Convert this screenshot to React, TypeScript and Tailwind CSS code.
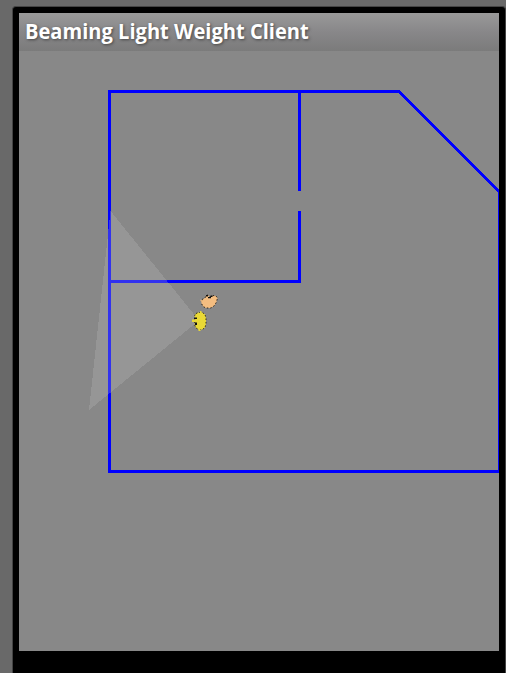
const LIGHT_BODY = 'M202 299.5L205 298L206 295.5L208 295L210 297L213 295.5L216 296L217.5 298L216.5 302L214.5 305.5L211 308H206L203 306.5L201.5 303.5Z';
const YELLOW_BODY = 'M196 313.5L198.5 312.5H202.5L205 314.5L206 318V324L205 327.5L202.5 329.5H198.5L196 328L194.7 325V315.5Z';

function FloorPlan() {
  return (
    <svg className="block h-[600px] w-[480px]" viewBox="19 51 480 600" shapeRendering="crispEdges">
      <g fill="none" stroke="#0000ff" strokeWidth="3">
        <path d="M399 91.5H109.5V471.5H499.5V191" />
        <path d="M398.5 91.5H399.3L499.3 191.5" strokeWidth="2.9" />
        <path d="M299.5 91V191M299.5 211V281.5H110" />
      </g>
      <path d="M110.5 211L199 320.5L89 410Z" fill="#c0c0c0" fillOpacity="0.26" />
      <g shapeRendering="auto">
        <path d={LIGHT_BODY} fill="#f4bd80" />
        <path d={LIGHT_BODY} fill="none" stroke="#2b241c" strokeWidth="1" strokeDasharray="1.5 2" />
        <path d="M200 299.5L203.5 301L202.5 304Z" fill="#f4bd80" />
        <path d="M206 295H208V296.5H206ZM208 297H211V298.3H208ZM210.5 295.5H212.5V297H210.5Z" fill="#101010" />
      </g>
      <g shapeRendering="auto">
        <path d={YELLOW_BODY} fill="#e9d936" />
        <path d={YELLOW_BODY} fill="none" stroke="#373414" strokeWidth="1" strokeDasharray="1.5 2" />
        <path d="M192 319.5H198V322H192ZM200 311H201.5V313H200ZM198.5 329H200.5V331H198.5Z" fill="#e9d936" />
        <path d="M194 317.5H197V319H194ZM195 322.5H197V325H195Z" fill="#101010" />
      </g>
    </svg>
  );
}

export default function App() {
  return (
    <div className="h-[673px] w-[506px] overflow-hidden bg-[#696969] pl-3 pt-1.5">
      <div className="h-[667px] w-[494px] rounded-t-[4px] border-x border-t border-[#444444] bg-black pl-1.5 pt-1.5">
        <main className="h-[638px] w-[480px] overflow-hidden bg-[#888888]">
          <header className="flex h-[38px] items-center bg-linear-to-b from-[#999999] via-[#888789] to-[#7b7b7b] pb-0.5 pl-1.5">
            <h1 className="origin-left scale-x-[0.934] whitespace-nowrap font-['Open_Sans','Noto_Sans',sans-serif] text-[21.5px] font-bold leading-[36px] text-white [text-shadow:1px_1px_3px_#444444]">
              Beaming Light Weight Client
            </h1>
          </header>
          <FloorPlan />
        </main>
      </div>
    </div>
  );
}
